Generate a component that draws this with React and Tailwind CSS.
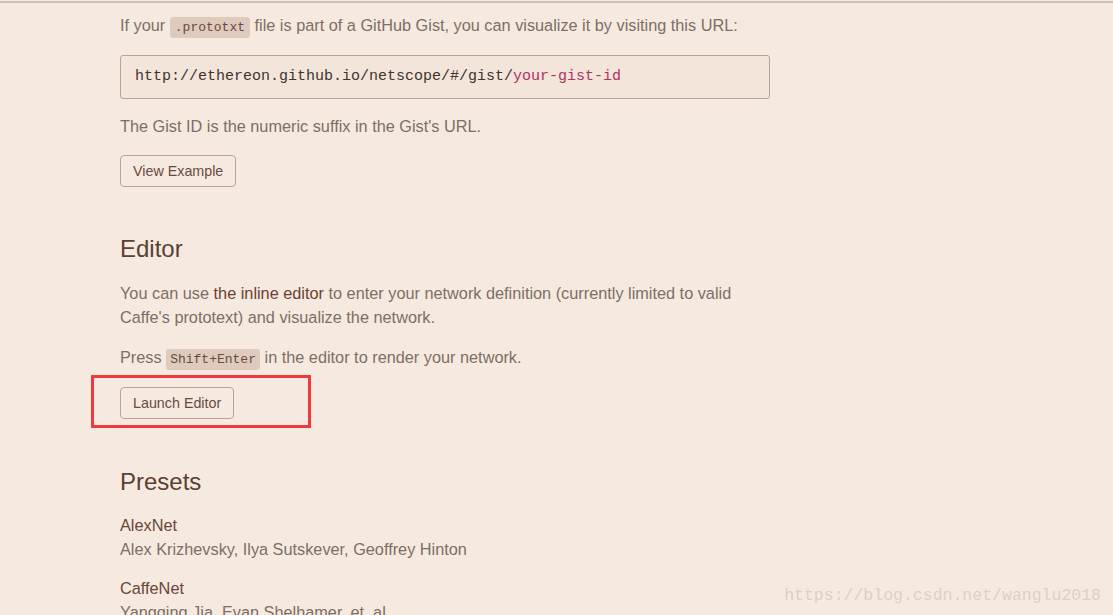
export default function App() {
  return (
    <div className="relative h-[615px] w-full overflow-hidden bg-[#f6eae0] font-['Liberation_Sans',Arial,sans-serif] text-[16.3px] leading-[24px] text-[#7d6e66]">
      <div className="mt-px h-[2px] bg-[#c7c2be]" />

      <div className="ml-[120px] w-[650px] pt-[10px]">
        <p>
          If your{" "}
          <code className="rounded-[3px] bg-[#dfcbbd] px-[5px] py-[3px] font-['Liberation_Mono',monospace] text-[13px] leading-none text-[#6b4a3e]">
            .prototxt
          </code>{" "}
          file is part of a GitHub Gist, you can visualize it by visiting this URL:
        </p>

        <pre className="mt-[18px] rounded-[3px] border border-[#bba292] bg-[#f3e5da] px-[14px] py-[9px] font-['Liberation_Mono',monospace] text-[15px] leading-[24px] text-[#3e3430]">
          http://ethereon.github.io/netscope/#/gist/<span className="text-[#b23060]">your-gist-id</span>
        </pre>

        <p className="mt-[15px]">The Gist ID is the numeric suffix in the Gist's URL.</p>

        <button className="mt-[17px] block rounded-[4px] border border-[#bfa192] px-[12px] py-[5px] text-[14.3px] leading-[20px] text-[#6a4a3e]">
          View Example
        </button>

        <h2 className="mt-[49px] text-[24px] leading-[26px] text-[#5c4033]">Editor</h2>

        <p className="mt-[19px]">
          You can use <a className="text-[#6e3f30]">the inline editor</a> to enter your network definition (currently limited to valid Caffe's prototext) and visualize the network.
        </p>

        <p className="mt-[16px]">
          Press{" "}
          <code className="rounded-[3px] bg-[#dfcbbd] px-[4px] py-[3px] font-['Liberation_Mono',monospace] text-[13px] leading-none text-[#6b4a3e]">
            Shift+Enter
          </code>{" "}
          in the editor to render your network.
        </p>

        <div className="relative mt-[18px] w-fit">
          <button className="block rounded-[4px] border border-[#bfa192] px-[12px] py-[5px] text-[14.3px] leading-[20px] text-[#6a4a3e]">
            Launch Editor
          </button>
          <div className="absolute left-[-29px] top-[-12px] h-[53px] w-[220px] border-[3px] border-[#ee3a3f]" />
        </div>

        <h2 className="mt-[50px] text-[24px] leading-[26px] text-[#5c4033]">Presets</h2>

        <div className="mt-[18px]">
          <div className="text-[#6b4537]">AlexNet</div>
          <div>Alex Krizhevsky, Ilya Sutskever, Geoffrey Hinton</div>
        </div>

        <div className="mt-[15px]">
          <div className="text-[#6b4537]">CaffeNet</div>
          <div>Yangqing Jia, Evan Shelhamer, et. al.</div>
        </div>
      </div>

      <div className="absolute bottom-[9px] right-[12px] font-['Liberation_Mono',monospace] text-[16.5px] leading-[20px] text-[#dcd0c6]">
        https://blog.csdn.net/wanglu2018
      </div>
    </div>
  )
}
